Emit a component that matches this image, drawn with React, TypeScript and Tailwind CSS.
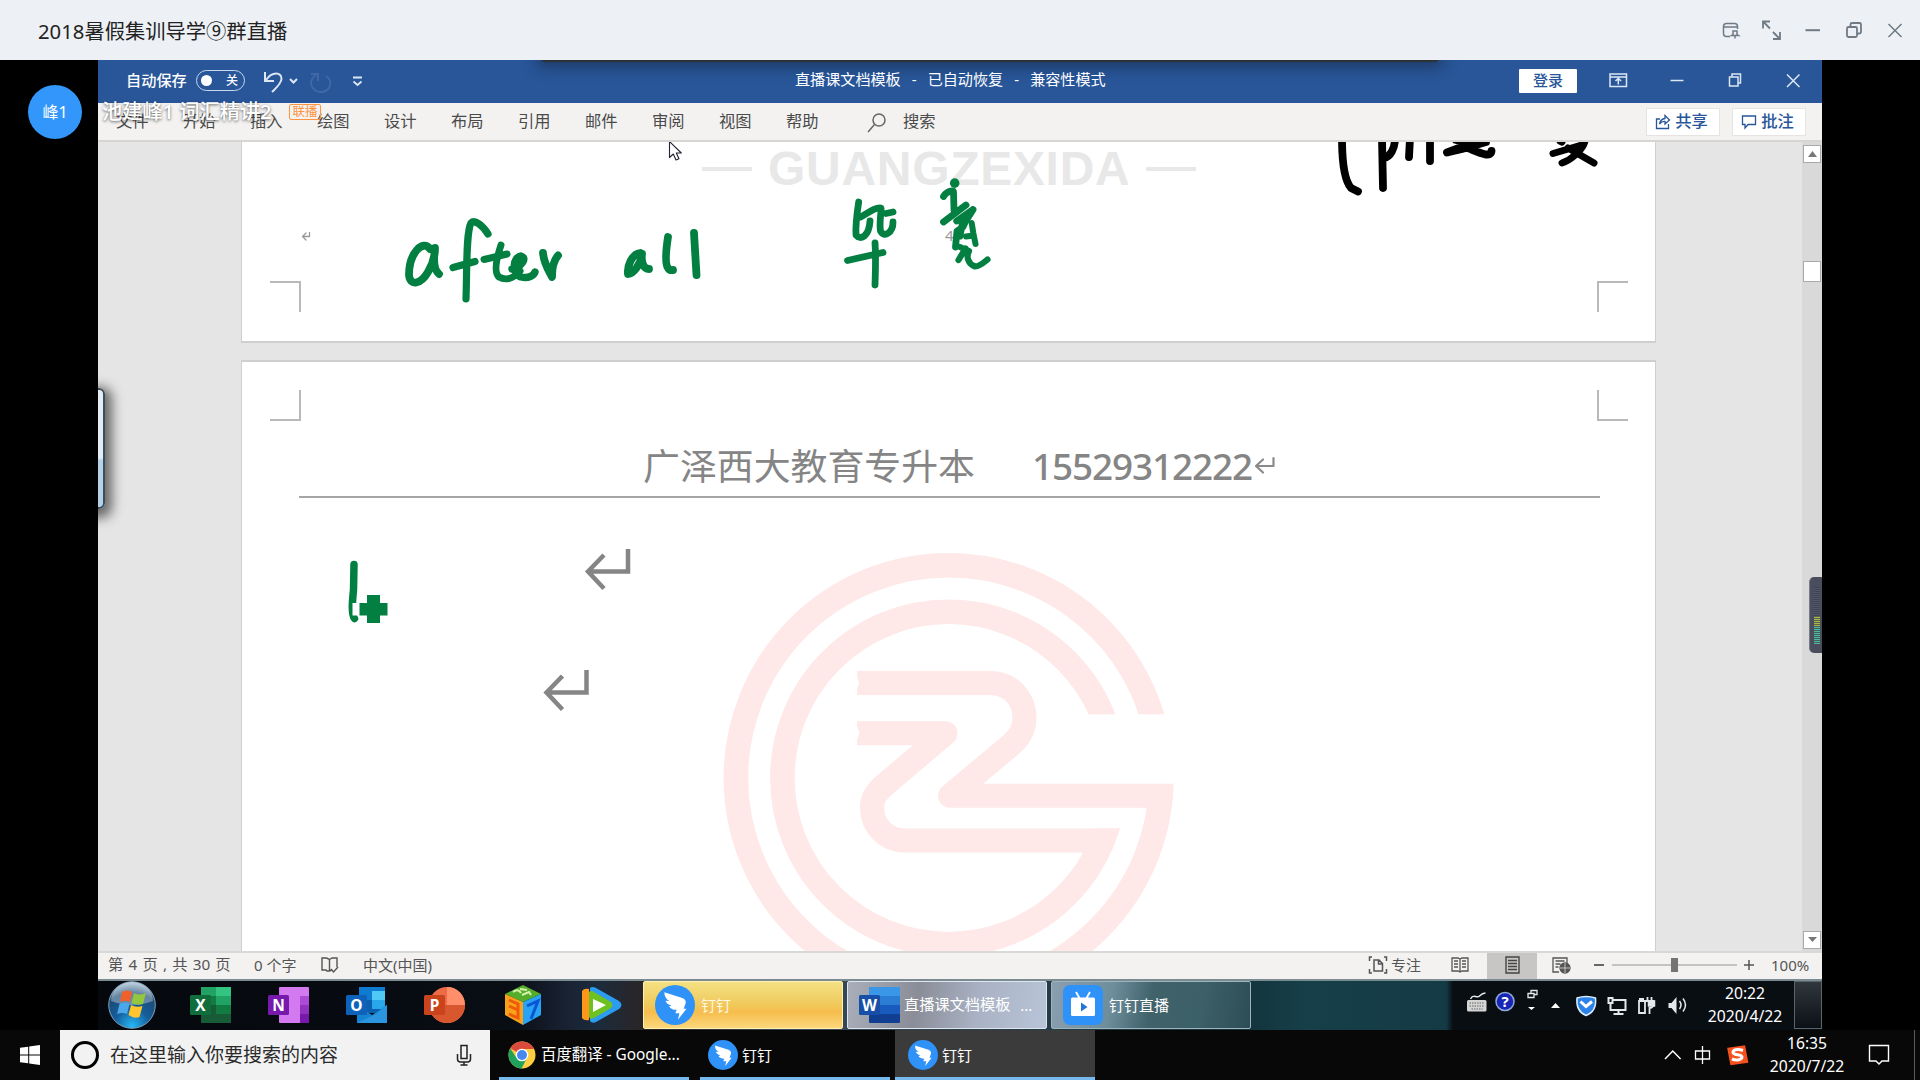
import React from "react";

const sans = "font-['Noto_Sans','Noto_Sans_CJK_SC',sans-serif]";

function DingIcon({ className }: { className: string }) {
  return (
    <svg viewBox="0 0 24 24" className={className}>
      <circle cx="12" cy="12" r="12" fill="#2f92f8" />
      <path
        fill="#fff"
        d="M5.6 4.4 16.4 7.8Q18.8 8.8 18.4 11L17.2 14.2H18.9L13.8 20.8 14.6 17H12.2L13 14.9Q9.6 14.8 8.4 12.7L10 12.4Q6.9 11.4 6.3 9.4L8.6 9.6Q5.6 8 5.6 4.4Z"
      />
    </svg>
  );
}

function OfficeIcon({ kind }: { kind: "X" | "N" | "O" | "P" | "W" }) {
  const art = {
    X: (
      <>
        <rect x="11" y="0" width="30" height="36" fill="#185c37" />
        <rect x="11" y="0" width="15" height="18" fill="#21a366" />
        <rect x="26" y="0" width="15" height="9" fill="#33c481" />
        <rect x="26" y="9" width="15" height="9" fill="#21a366" />
        <rect x="11" y="9" width="15" height="9" fill="#107c41" />
        <rect x="26" y="18" width="15" height="9" fill="#107c41" />
        <rect x="0" y="8" width="21" height="20" rx="1.5" fill="#0f6e3c" />
      </>
    ),
    N: (
      <>
        <rect x="11" y="0" width="30" height="36" rx="1" fill="#d37af0" />
        <rect x="32" y="9" width="9" height="9" fill="#ae4bd5" />
        <rect x="32" y="18" width="9" height="9" fill="#9332bf" />
        <rect x="32" y="27" width="9" height="9" fill="#7719aa" />
        <rect x="0" y="8" width="21" height="20" rx="1.5" fill="#7719aa" />
      </>
    ),
    O: (
      <>
        <rect x="13" y="0" width="26" height="26" fill="#0a5fae" />
        <rect x="13" y="0" width="26" height="13" fill="#0f7bd0" />
        <rect x="26" y="4" width="13" height="9" fill="#50c8f5" />
        <rect x="26" y="13" width="13" height="9" fill="#28a8ea" />
        <path d="M11 18 26 28 41 18V36H11Z" fill="#1483d2" />
        <path d="M11 36 30 27 41 18V36Z" fill="#2b95e0" />
        <rect x="0" y="8" width="21" height="20" rx="1.5" fill="#0f62ba" />
      </>
    ),
    P: (
      <>
        <circle cx="23" cy="18" r="18" fill="#ed6c47" />
        <path d="M23 0A18 18 0 0 1 41 18H23Z" fill="#ff8f6b" />
        <path d="M5 18A18 18 0 0 0 41 18Z" fill="#d9572f" />
        <rect x="0" y="8" width="21" height="20" rx="1.5" fill="#c9441d" />
      </>
    ),
    W: (
      <>
        <rect x="10" y="0" width="31" height="36" rx="1" fill="#103f91" />
        <rect x="10" y="0" width="31" height="9" fill="#3a97e8" />
        <rect x="10" y="9" width="31" height="9" fill="#2b7cd3" />
        <rect x="10" y="18" width="31" height="9" fill="#185abd" />
        <rect x="0" y="8" width="21" height="20" rx="1.5" fill="#174fa8" />
      </>
    ),
  }[kind];
  return (
    <svg viewBox="0 0 41 36" className="h-9 w-[41px] shrink-0">
      {art}
      <text x="10.5" y="23.5" textAnchor="middle" fontSize="15.5" fontWeight="700" fill="#fff" fontFamily="Noto Sans">
        {kind}
      </text>
    </svg>
  );
}

function StartOrb() {
  return (
    <svg viewBox="0 0 48 48" className="h-12 w-12 shrink-0">
      <defs>
        <radialGradient id="orb" cx=".5" cy=".95" r=".95">
          <stop offset="0" stopColor="#25b8f5" />
          <stop offset=".4" stopColor="#155e9b" />
          <stop offset=".75" stopColor="#1c4a74" />
          <stop offset="1" stopColor="#a9c3d6" />
        </radialGradient>
      </defs>
      <circle cx="24" cy="24" r="23.3" fill="url(#orb)" stroke="#7fa3bd" strokeWidth="1" />
      <path d="M3 20A21 19 0 0 1 45 20Q24 28 3 20Z" fill="#fff" opacity=".33" />
      <path d="M14 11Q19 8 24 11L22 21Q17 18.500 12 21Z" fill="#f0602a" />
      <path d="M26 12Q31 15 38 12L35 23Q29 25 23.500 22Z" fill="#93c83e" />
      <path d="M11.500 23Q17 20.500 21.500 23L19 33Q14.500 31 9 33Z" fill="#4aa8ea" />
      <path d="M23 24Q28.500 27 34.500 25L31.500 36Q26 38 20.500 34Z" fill="#ffc42e" />
    </svg>
  );
}

const tabs = ["文件", "开始", "插入", "绘图", "设计", "布局", "引用", "邮件", "审阅", "视图", "帮助"];

function AppTitleBar() {
  return (
    <header className="flex h-[60px] shrink-0 items-center bg-[#edf1f5] pl-[38px] text-[#6f7a85]">
      <h1 className="flex-1 pt-[2px] text-[20.300px] leading-none text-[#222]">2018暑假集训导学⑨群直播</h1>
      <svg width="206" height="60" viewBox="1714 0 206 60" fill="none" stroke="currentColor" strokeWidth="1.5">
        <path d="M1730 36.500h-3.500q-3 0-3-3v-7q0-3 3-3h8q3 0 3 3v2.500M1723.500 27h14M1733 31h4v3.500l1.500 1h-7l1.500-1zM1735 36v2.500" />
        <path d="M1763 28.500v-7h7M1763.500 22l6.500 6.500M1780 32v7h-7M1779.500 38.500l-6.500-6.500" strokeWidth="1.800" />
        <path d="M1805.500 30.200h14.500" strokeWidth="2" />
        <path d="M1850.500 26v-1.500q0-1.500 1.500-1.500h7.500q1.500 0 1.500 1.500v7.500q0 1.500-1.500 1.500H1857" strokeWidth="1.800" />
        <rect x="1847" y="27" width="10" height="10" rx="1.500" strokeWidth="1.800" />
        <path d="M1888.500 24l13 13M1901.500 24l-13 13" />
      </svg>
    </header>
  );
}

function WordTitle() {
  return (
    <div className="relative flex h-[43px] shrink-0 items-center overflow-hidden bg-[#285698] pb-[2px] text-[15px] leading-none text-white">
      <div className="absolute left-[443px] top-[-6px] h-2 w-[898px] rounded bg-[#2c3236] shadow-[0_0_14px_5px_rgba(20,30,50,0.5)]" />
      <span className="relative ml-[28px] w-[70px] text-[15.200px] font-medium">自动保存</span>
      <div className="relative flex h-[21px] w-[49px] items-center justify-between rounded-full border-[1.500px] border-[#c9d8ee] pl-1 pr-[6px] text-[12px]">
        <i className="h-[11px] w-[11px] rounded-full bg-white" />
        <b className="font-medium">关</b>
      </div>
      <svg className="relative ml-[13px]" width="110" height="43" viewBox="258 59 110 43" fill="none" stroke="#dce7f6" strokeWidth="2">
        <path d="M265 72v9h9M266 80C272 71 282 72 281.500 79C281 84 276 88 272 92" />
        <path d="M290 79l3.500 3.500 3.500-3.500" />
        <path d="M316 75c-10 7-3 17 5 17 9 0 13-11 5-16M311 74h7v7" stroke="#4068a6" />
        <path d="M353 77.500h9M353.500 81.500l4 3.500 4-3.500" strokeWidth="1.800" />
      </svg>
      <div className="relative ml-[427px] flex w-[724px] items-center pb-[2px] text-[15.100px]">
        <span>直播课文档模板</span>
        <span className="w-[27px] text-center">-</span>
        <span>已自动恢复</span>
        <span className="w-[27px] text-center">-</span>
        <span>兼容性模式</span>
      </div>
      <div className="flex h-6 w-[58px] items-center justify-center rounded-[1px] bg-white font-medium text-[#285698]">登录</div>
      <svg width="245" height="43" viewBox="1577 59.500 245 43" fill="none" stroke="#dce7f6" strokeWidth="1.500" className="shrink-0">
        <path d="M1610 74.500h16.500v12.500H1610zM1610 77.500h16.500M1618.300 85v-6M1615.500 81.500l2.800-2.800 2.800 2.800" />
        <path d="M1670.500 81h13" />
        <path d="M1729.500 77.500h8.500v9h-8.500zM1732 77v-2.500h8.500v9H1738" />
        <path d="M1787 75l12.500 12.500M1799.500 75L1787 87.500" />
      </svg>
    </div>
  );
}

function Ribbon() {
  return (
    <div className="flex h-[39px] shrink-0 items-center border-b-2 border-[#d6d5d4] bg-[#f3f2f1] text-[16.300px] leading-none text-[#4a4a4a]">
      <nav className="ml-[18px] flex">
        {tabs.map((t) => (
          <span key={t} className="w-[67px]">{t}</span>
        ))}
      </nav>
      <svg width="20" height="24" viewBox="0 0 20 24" fill="none" stroke="#666" strokeWidth="1.500" className="ml-[14px]">
        <circle cx="12" cy="10" r="6" />
        <path d="M7.500 14.500 1 22" />
      </svg>
      <span className="ml-[16px] flex-1">搜索</span>
      <div className="flex gap-3 pr-4 font-medium text-[#285698]">
        <div className="flex h-7 w-[74px] items-center justify-center gap-1 border border-[#e6e4e2] bg-white pr-[3px]">
          <svg width="16" height="16" viewBox="0 0 16 16" fill="none" stroke="currentColor" strokeWidth="1.300">
            <path d="M5 5H1.500v9.500h12V10M4.500 10Q5.500 5 10 4.500V1.500l4.500 4.500-4.500 4V7.500Q7 7 4.500 10Z" />
          </svg>
          共享
        </div>
        <div className="flex h-7 w-[74px] items-center justify-center gap-1 border border-[#e6e4e2] bg-white pr-[3px]">
          <svg width="16" height="16" viewBox="0 0 16 16" fill="none" stroke="currentColor" strokeWidth="1.300">
            <path d="M1.500 2h13v8.500H7L4 14v-3.500H1.500Z" />
          </svg>
          批注
        </div>
      </div>
    </div>
  );
}

/** Watermark emblem printed behind the text of every page. */
function Emblem() {
  return (
    <svg className="absolute left-[472px] top-[181px]" width="460" height="410" viewBox="714 544 460 410" fill="none" stroke="#fee8e8" strokeWidth="24">
      <defs>
        <clipPath id="outerGap"><path d="M714 544H1180V715.300H1040V785H1180V960H714Z" /></clipPath>
        <clipPath id="innerGap"><path d="M714 544H1180V715.300H1040V829.500H1180V960H714Z" /></clipPath>
        <clipPath id="outerDisc"><circle cx="948.600" cy="779" r="225" /></clipPath>
        <clipPath id="innerDisc"><circle cx="948.600" cy="779" r="178.500" /></clipPath>
      </defs>
      <circle cx="948.600" cy="779" r="212.700" strokeWidth="24.600" clipPath="url(#outerGap)" />
      <circle cx="948.600" cy="779" r="166.200" strokeWidth="24.600" clipPath="url(#innerGap)" />
      <g clipPath="url(#outerDisc)" strokeLinejoin="round">
        <path d="M857 684H990C1011 684 1024.500 700 1024.500 719C1024.500 732 1018 740 1009 747.500L950 796.700H1180" />
      </g>
      <g clipPath="url(#innerDisc)" strokeLinejoin="round">
        <path d="M857 734.300H945.500L888 783C876 793 872 799 872 809C872 827 887 841.500 904 841.500H1140" />
      </g>
      <path d="M855 671l4 13-4 13zM855 721l4.500 13-4.500 13z" fill="#fff" stroke="none" />
    </svg>
  );
}

/** Pen annotations, selection pointer and the other marks that float over the pages. */
function InkLayer() {
  return (
    <svg className="pointer-events-none absolute inset-0" width="1724" height="809" viewBox="98 142 1724 809" fill="none" strokeLinecap="round" strokeLinejoin="round">
      <g stroke="#038041" strokeWidth="7.800">
        <path d="M430 249C423 239 409 253 409 275C410 287 421 284 428 272C434 262 435 254 435 248C433 262 434 270 439 274" />
        <path d="M488 234C483 226 475 219 471 223C466 232 467 270 466 299M453 267.500L475 261.500" strokeWidth="7.200" />
        <path d="M501 245C497 257 493 272 499 277C506 281 514 278 520 271M484 259.500L507 254" strokeWidth="7" />
        <path d="M512 269C521 267 528 258 521 256C513 257 511 273 521 277C529 279 534 275 535 272" strokeWidth="7.400" />
        <path d="M543 253C544 264 549 271 552 277C552 268 554 260 558 255.500" />
        <path d="M640 253C632 254 627 266 628 274C634 274 641 263 642 254C641 261 643 269 649 269" />
        <path d="M668 237C666 250 665 264 668 268C670 271 672 270 673 270M694 233L696.500 275" />
        <g strokeWidth="6.800">
          <path d="M858.700 202C857 213 855.500 226 856 235C861 241 869 236 870 221M860.500 217C868 213 875 207 881 208C881.500 213 879 222 880.500 231C884 238 893 233 893 222M886 213.500L893 212" />
          <path d="M847.500 260.500L883 252.500M875 243C876 256 875.500 270 875 285" />
          <path d="M954.700 183V183.200" strokeWidth="9.500" />
          <path d="M943.500 196.500C946 192 953.500 189 953.500 192L954 210M943.500 222L966 205M973 209.500L956.700 221M973 209.500C970 215 965 221 963 227L957 231L955.500 247M963 220L960 236" />
          <path d="M971.700 223L973.300 233 975.500 244M966 236.500L973 235.500" strokeWidth="6" />
          <path d="M958.500 260L965.500 248.500M960 247L969 251C966 257 968 264 975 266.500C981 266 984 262 987.500 259.500" strokeWidth="6.200" />
        </g>
      </g>
      <g stroke="#000" strokeWidth="7.800">
        <path d="M1342 138C1342 160 1344 180 1351 188L1358 191.500" />
        <path d="M1382 138L1383 188M1395 138C1395 149 1390 157 1384 158M1410 138L1409 157M1430 138L1430 161" />
        <path d="M1456 140L1472 143L1447 152.500L1462 149L1486 142M1470 149C1480 153 1491 158 1491.500 151M1474 143L1468 148" />
        <path d="M1553 153.500L1582 145M1585 141C1583 150 1571 160 1562 163M1568 148L1594 163M1560 141L1562 142" strokeWidth="7" />
      </g>
      <path d="M354 564.500L353.500 590C352.500 600 351 614 354.500 618.500" stroke="#038041" strokeWidth="7.500" />
      <path d="M352.500 603H359.500V615.500H352.500Z" fill="#fff" />
      <path d="M367 595H380V603H387.500V615.500H380V623H367V615.500H359.500V603H367Z" fill="#038041" />
      <g stroke="#858585" strokeWidth="4.500" strokeLinecap="butt" strokeLinejoin="miter">
        <path d="M628 549V571.500H588M604 555L588 571.500L604 588.500" />
        <path d="M586.500 670V692.500H546.500M562.500 676L546.500 692.500L562.500 709.500" />
      </g>
      <path d="M309.500 232.500V236.500H302.500M306 233L302.500 236.500L306 240" stroke="#999" strokeWidth="1.300" />
      <path d="M1273.500 458V466H1256M1263 459.500L1256 466L1263 472.500" stroke="#8a8a8a" strokeWidth="2.200" />
      <path d="M669.500 141.500V157.500L673.300 154L676 160L679 158.800L676.300 153H681.300Z" fill="#fff" stroke="#223" strokeWidth="1.100" />
    </svg>
  );
}

const corner = "absolute h-[31px] w-[31px] border-[#b9b9b9]";

function Document() {
  return (
    <div className="relative flex h-[809px] shrink-0 overflow-hidden bg-[#e5e5e5]">
      <div className="flex flex-1 flex-col items-start gap-[17px] pl-[143px]">
        <section className="relative h-[201px] w-[1415px] shrink-0 border-x border-b-2 border-[#cfcfcf] bg-white">
          <div className="flex items-center pl-[460px] pt-[3px] leading-none text-[#e8e8e8]">
            <i className="h-[4px] w-[50px] bg-[#e8e8e8]" />
            <span className="ml-[16px] w-[378px] whitespace-nowrap font-['Liberation_Sans',sans-serif] text-[48px] font-bold tracking-[0.700px]">GUANGZEXIDA</span>
            <i className="h-[4px] w-[50px] bg-[#e8e8e8]" />
          </div>
          <span className="absolute left-[703px] top-[86px] text-[15px] leading-none text-[#999]">4</span>
          <i className={corner + " left-[28px] top-[139px] border-r-2 border-t-2"} />
          <i className={corner + " right-[27px] top-[139px] border-l-2 border-t-2"} />
        </section>
        <section className="relative w-[1415px] flex-1 border-x border-t-2 border-[#cfcfcf] bg-white">
          <Emblem />
          <i className={corner + " left-[28px] top-[28px] border-b-2 border-r-2"} />
          <i className={corner + " right-[27px] top-[28px] border-b-2 border-l-2"} />
          <div className="ml-[57px] flex h-[136px] w-[1301px] items-end border-b-2 border-[#a5a5a5] pb-[11px] pl-[344px] text-[36.900px] leading-none text-[#858585]">
            <span>广泽西大教育专升本</span>
            <span className="ml-[57px] font-medium tracking-[-1.100px]">15529312222</span>
          </div>
        </section>
      </div>
      <div className="flex w-5 flex-col items-center bg-[#d9d9d9]">
        <div className="mt-[3px] flex h-[18px] w-[18px] items-center justify-center border border-[#aaa] bg-white">
          <svg width="9" height="6"><path d="M0 6L4.500 0 9 6Z" fill="#777" /></svg>
        </div>
        <div className="mt-[98px] h-[21px] w-[18px] border border-[#aaa] bg-white" />
        <div className="mb-[2px] mt-auto flex h-[18px] w-[18px] items-center justify-center border border-[#aaa] bg-white">
          <svg width="9" height="6"><path d="M0 0L4.500 5 9 0Z" fill="#777" /></svg>
        </div>
      </div>
      <InkLayer />
      <div className="absolute left-[-12px] top-[246px] h-[121px] w-[19px] rounded-[6px] border-2 border-[#3c4c58] bg-linear-to-b from-[#e4edf5] from-58% to-[#b5d1ea] to-60% shadow-[2px_4px_12px_5px_rgba(0,0,0,0.55)]" />
      <div className="absolute right-0 top-[435px] flex h-[76px] w-[13px] items-end rounded-l-[5px] border-l border-[#777d88] bg-[#4a4d5c] pb-[9px] pl-[4px]">
        <div className="flex w-[6px] flex-col">
          <i className="h-[29px] bg-[repeating-linear-gradient(0deg,#3f4252_0_1px,#525666_1px_2px)]" />
          <i className="h-[10px] bg-[repeating-linear-gradient(0deg,#a9b84a_0_1px,#59604c_1px_2px)]" />
          <i className="h-[18px] bg-[repeating-linear-gradient(0deg,#50b8a0_0_1px,#40605c_1px_2px)]" />
        </div>
      </div>
    </div>
  );
}

function StatusBar() {
  return (
    <div className="flex h-[28px] shrink-0 items-center border-t-2 border-[#d8d8d7] bg-[#f3f2f1] pb-[2px] text-[15px] leading-none text-[#555]">
      <span className="ml-[10px] w-[146px] whitespace-nowrap text-[15.300px] [word-spacing:1.200px]">第 4 页 , 共 30 页</span>
      <span className="w-[66px] whitespace-nowrap">0 个字</span>
      <svg width="20" height="18" viewBox="0 0 20 18" fill="none" stroke="#555" strokeWidth="1.400">
        <path d="M9.500 3v12M9.500 15H7L6 14H2V2h4.500l3 1.500L12 2h5v9M9.500 15l2-1M11 13l2.500 3L18 11" />
      </svg>
      <span className="ml-[23px] w-[1005px] whitespace-nowrap">中文(中国)</span>
      <svg width="20" height="20" viewBox="0 0 20 20" fill="none" stroke="#555" strokeWidth="1.500">
        <path d="M4 2H1.500v4M16 2h2.500v4M4 18H1.500v-4M16 18h2.500v-4M6 5h5l3.500 3.500V16H6zM10.500 5v4h4" />
      </svg>
      <span className="ml-[3px] w-[60px]">专注</span>
      <svg width="18" height="18" viewBox="0 0 18 18" fill="none" stroke="#555" strokeWidth="1.300">
        <path d="M9 3v13M9 3L7 2H1v13h6l2 1 2-1h6V2h-6zM3 5h4M3 8h4M3 11h4M11 5h4M11 8h4M11 11h4" />
      </svg>
      <div className="-mb-[2px] ml-[18px] flex h-[26px] w-[50px] items-center justify-center bg-[#c8c6c4] pb-[2px]">
        <svg width="15" height="18" viewBox="0 0 15 18" fill="none" stroke="#444" strokeWidth="1.400">
          <path d="M1 1h13v16H1zM3 4.500h9M3 7.500h9M3 10.500h9M3 13.500h9" />
        </svg>
      </div>
      <svg width="19" height="18" viewBox="0 0 19 18" fill="none" stroke="#555" strokeWidth="1.300" className="ml-[15px]">
        <path d="M7 16H1V2h14v5M3.500 5h9M3.500 8h5M3.500 11h3" />
        <circle cx="13" cy="12" r="5" fill="#555" />
        <path d="M8 12h10M13 7v10" stroke="#ddd" strokeWidth=".8" />
      </svg>
      <i className="ml-[23px] h-[2px] w-[10px] bg-[#666]" />
      <div className="ml-2 flex h-[2px] w-[125px] items-center justify-center bg-[#c4c3c2]">
        <i className="h-[14px] w-[7px] bg-[#747474]" />
      </div>
      <svg width="10" height="10" className="ml-[7px]"><path d="M0 5h10M5 0v10" stroke="#555" strokeWidth="1.500" /></svg>
      <span className="ml-[17px]">100%</span>
    </div>
  );
}

function RemoteTaskbar() {
  const button = "flex h-12 w-[200px] shrink-0 items-center rounded-[2px] border";
  return (
    <div className="flex h-[51px] shrink-0 items-center border-t-2 border-[#7b8b92] bg-[linear-gradient(90deg,#05080d_0,#090d14_24%,#182131_27%,#1c2b3c_29%,#2c2422_32%,#3a4a58_40%,#12323a_66%,#163f4a_70%,#143a45_78.200%,#090e13_78.600%)] pb-px text-white">
      <div className="ml-[10px] flex w-[82px]"><StartOrb /></div>
      <div className="flex w-[313px] items-center gap-[37px]">
        <OfficeIcon kind="X" />
        <OfficeIcon kind="N" />
        <OfficeIcon kind="O" />
        <OfficeIcon kind="P" />
      </div>
      <svg viewBox="0 0 38 42" className="ml-[1px] h-[42px] w-[38px] shrink-0">
        <path d="M19 1 37 10 19 18 1 10Z" fill="#55ad2c" />
        <path d="M1 10 19 18V41L1 31Z" fill="#f9a11b" />
        <path d="M37 10 19 18V41L37 31Z" fill="#29a4f5" />
        <path d="M9 8q5-4 8 1M18 11l7-3 2 3M16 5l7 1" stroke="#d5f2a8" strokeWidth="2" fill="none" />
        <path d="M5 16l9 4v14l-9-4M5 22l9 4" stroke="#ee5a0b" strokeWidth="3" fill="none" />
        <path d="M23 22l11-5-7 18" stroke="#0a55d5" strokeWidth="3" fill="none" />
      </svg>
      <svg viewBox="0 0 42 36" className="ml-[39px] h-9 w-[42px] shrink-0">
        <path d="M9 1Q11-1 15 1L38 14Q43 18 38 22L15 35Q11 37 9 34Z" fill="#2c9cf0" />
        <path d="M1 4Q3 1 8 2V33Q3 34 1 31Z" fill="#ff971b" />
        <path d="M8 5Q10 3 13 5L30 15Q33 18 30 21L13 31Q9 33 8 30Z" fill="#6fc11f" />
        <path d="M12 12 25 18 12 25Z" fill="#fff" />
      </svg>
      <div className="ml-[20px] flex gap-[4px] text-[15px] leading-none">
        <div className={button + " border-[#fff2b0] bg-[linear-gradient(180deg,#f4e183_0,#f0cb60_45%,#f6bd4c_65%,#fbd77b_100%)] pl-[11px]"}>
          <DingIcon className="h-10 w-10" />
          <span className="ml-[6px] text-[#fff7e0]">钉钉</span>
        </div>
        <div className={button + " border-[#dfe5ef] bg-[linear-gradient(100deg,#a9afba_0,#8a8d98_35%,#a9b2c4_65%,#b8c4d8_100%)] pl-[11px]"}>
          <OfficeIcon kind="W" />
          <span className="ml-[4px] whitespace-nowrap text-[15.200px]">直播课文档模板</span>
          <span className="ml-[10px]">...</span>
        </div>
        <div className={button + " border-[#9fb3bc] bg-[linear-gradient(100deg,#8b9fb0_0,#6e8e9c_30%,#3f626b_50%,#3c6067_75%,#2d4d56_100%)] pl-[11px]"}>
          <svg viewBox="0 0 40 40" className="h-10 w-10">
            <rect width="40" height="40" rx="7" fill="#2f92f8" />
            <path d="M13 7l4 7M27 7l-4 7" stroke="#fff" strokeWidth="1.800" />
            <rect x="8" y="12.500" width="24" height="18.500" rx="1.500" fill="#fff" />
            <path d="M18 17.500 24.500 22 18 26.500Z" fill="#2176d8" />
          </svg>
          <span className="ml-[6px]">钉钉直播</span>
        </div>
      </div>
      <svg width="232" height="49" viewBox="1463.500 981 232 49" fill="none" stroke="#e5e8ea" strokeWidth="1.500" className="ml-[213px] shrink-0">
        <path d="M1470 999c3-6 6 0 9-3 2-2 4-3 6-3" />
        <rect x="1466.500" y="1000" width="19.500" height="11.500" rx="1.500" fill="#d5d5d5" stroke="none" />
        <path d="M1469 1003h15M1469 1006h15M1471 1009h11" stroke="#888" strokeDasharray="1.500 1" />
        <circle cx="1504.500" cy="1001.500" r="9" fill="#1726b5" stroke="#8fa6da" />
        <text x="1504.500" y="1007" fontSize="15" fontWeight="700" textAnchor="middle" fill="#fff" stroke="none" fontFamily="Noto Sans">?</text>
        <path d="M1527.500 993.500h6v4h-6zM1530.500 993v-2.500h6v4H1534" strokeWidth="1.300" />
        <path d="M1527.500 1007h7l-3.500 3zM1550.500 1008l4.500-5 4.500 5z" fill="#fff" stroke="none" />
        <path d="M1576.500 998q9-3 18.500 0c1 9-3 15-9.500 17.500-6-2.500-10-8-9-17.500z" fill="#2b82e8" stroke="#dceeff" />
        <path d="M1580 1001.500l5.500 5 6-5" stroke="#fff" strokeWidth="3" />
        <path d="M1613 1000h12v10h-15v-7M1608 998h4v5h-4zM1613 1014h10M1618 1010v4" strokeWidth="2" />
        <path d="M1638.500 999h5M1638.500 1001h6v12h-6zM1647 997v4M1651 997v4M1645 1001h8v4q-1 3-4 3v6" strokeWidth="1.800" />
        <path d="M1648 1001h6v5h-6z" fill="#e5e8ea" />
        <path d="M1668 1003h3l5-6v17l-5-6h-3z" fill="#e5e8ea" stroke="none" />
        <path d="M1679 1001q3 4 0 8M1682.500 998.500q5 6.500 0 13" />
      </svg>
      <div className="flex w-[98px] flex-col items-center gap-[8px] text-[15.700px] leading-[15px]">
        <span>20:22</span>
        <span>2020/4/22</span>
      </div>
      <div className="h-12 w-[28px] border border-[#59646b] bg-linear-to-b from-[#30373d] to-[#0b1116]" />
    </div>
  );
}

function HostTaskbar() {
  return (
    <footer className="flex h-[50px] shrink-0 bg-[#080808] text-[15px] leading-none text-white">
      <div className="flex w-[60px] items-center justify-center">
        <svg width="20" height="20" viewBox="0 0 20 20" fill="#fff">
          <path d="M0 2.800 8.200 1.700V9.500H0zM9.200 1.500 20 0V9.500H9.200zM0 10.500H8.200V18.300L0 17.200zM9.200 10.500H20V20L9.200 18.500z" />
        </svg>
      </div>
      <div className="flex w-[430px] items-center bg-[#f2f2f2] pl-[11px] text-[19px] text-[#2b2b2b]">
        <i className="h-7 w-7 rounded-full border-[3.500px] border-black" />
        <span className="ml-[11px] flex-1">在这里输入你要搜索的内容</span>
        <svg width="16" height="22" viewBox="0 0 16 22" fill="none" stroke="#222" strokeWidth="1.500" className="mr-[18px]">
          <path d="M5 1.500h6v13H5zM1.500 10v5q0 3 3 3h7q3 0 3-3v-5M8 18v3M4.500 21h7" />
        </svg>
      </div>
      <div className="ml-[9px] flex w-[190px] items-center border-b-[3px] border-[#76b9ed] pl-[9px] pt-[3px]">
        <svg width="28" height="28" viewBox="0 0 28 28" className="shrink-0">
          <circle cx="14" cy="14" r="13.500" fill="#ffcd42" />
          <path d="M14 14 2.300 7.300A13.500 13.500 0 0 1 25.700 7.300L26 8H14Z" fill="#dc4a3c" />
          <path d="M14 14 8.500 17 2.300 7.300A13.500 13.500 0 0 0 13.500 27.500L19 17Z" fill="#1fa25c" />
          <circle cx="14" cy="14" r="6.300" fill="#fff" />
          <circle cx="14" cy="14" r="5" fill="#4787f0" />
        </svg>
        <span className="ml-[5px] whitespace-nowrap text-[15.400px]">百度翻译 - Google...</span>
      </div>
      <div className="ml-[11px] flex w-[190px] items-center border-b-[3px] border-[#76b9ed] pl-[8px] pt-[3px]">
        <DingIcon className="h-[30px] w-[30px]" />
        <span className="ml-[4px]">钉钉</span>
      </div>
      <div className="ml-[5px] flex w-[200px] items-center border-b-[3px] border-[#76b9ed] bg-[#3b3b3b] pl-[13px] pt-[3px]">
        <DingIcon className="h-[30px] w-[30px]" />
        <span className="ml-[4px]">钉钉</span>
      </div>
      <svg width="92" height="50" viewBox="1660 1030 92 50" fill="none" stroke="#fff" strokeWidth="1.500" className="ml-[565px] shrink-0">
        <path d="M1665 1059l7.800-8 7.800 8" />
        <path d="M1695.500 1051h14v8h-14zM1702.500 1046v18" strokeWidth="1.300" />
        <path d="M1728 1048.500 1744.500 1046 1747.500 1062 1731 1064.500Z" fill="#f4511e" stroke="#f4511e" />
        <path d="M1743 1050.500c-6-2-10-.5-10 2 0 3 9 1.500 9 4.500 0 2.500-5 4-10 2" strokeWidth="3" />
      </svg>
      <div className="ml-[5px] flex w-[100px] flex-col items-center justify-center gap-[8px] text-[15.700px] leading-[15px]">
        <span>16:35</span>
        <span>2020/7/22</span>
      </div>
      <svg width="22" height="22" viewBox="0 0 22 22" fill="none" stroke="#fff" strokeWidth="1.400" className="ml-[11px] mt-[14px]">
        <path d="M1.500 1.500h19v15.500h-6.500L11 20l-3-3H1.500z" />
      </svg>
      <i className="ml-auto mr-[5px] w-px bg-[#5a5a5a]" />
    </footer>
  );
}

export default function App() {
  return (
    <div className={"flex h-[1080px] w-[1920px] flex-col overflow-hidden bg-black " + sans}>
      <AppTitleBar />
      <main className="flex h-[970px]">
        <aside className="w-[98px] pl-[28px] pt-[25px]">
          <div className="flex h-[54px] w-[54px] items-center justify-center rounded-full bg-[#3296fa] text-[16px] leading-none text-white">峰1</div>
        </aside>
        <div className="relative flex w-[1724px] flex-col">
          <WordTitle />
          <Ribbon />
          <Document />
          <StatusBar />
          <RemoteTaskbar />
          <div className="absolute left-[4px] top-[41px] flex items-start leading-none">
            <span className="w-[187px] whitespace-nowrap text-[20.200px] font-medium text-white [text-shadow:0_1px_3px_rgba(0,0,0,0.65)]">池建峰1 词汇精讲2</span>
            <span className="mt-[3px] flex h-[16px] w-[32px] items-center justify-center rounded-[2px] border border-[#ff943e] text-[12.500px] text-[#ff943e]">联播</span>
          </div>
        </div>
      </main>
      <HostTaskbar />
    </div>
  );
}
